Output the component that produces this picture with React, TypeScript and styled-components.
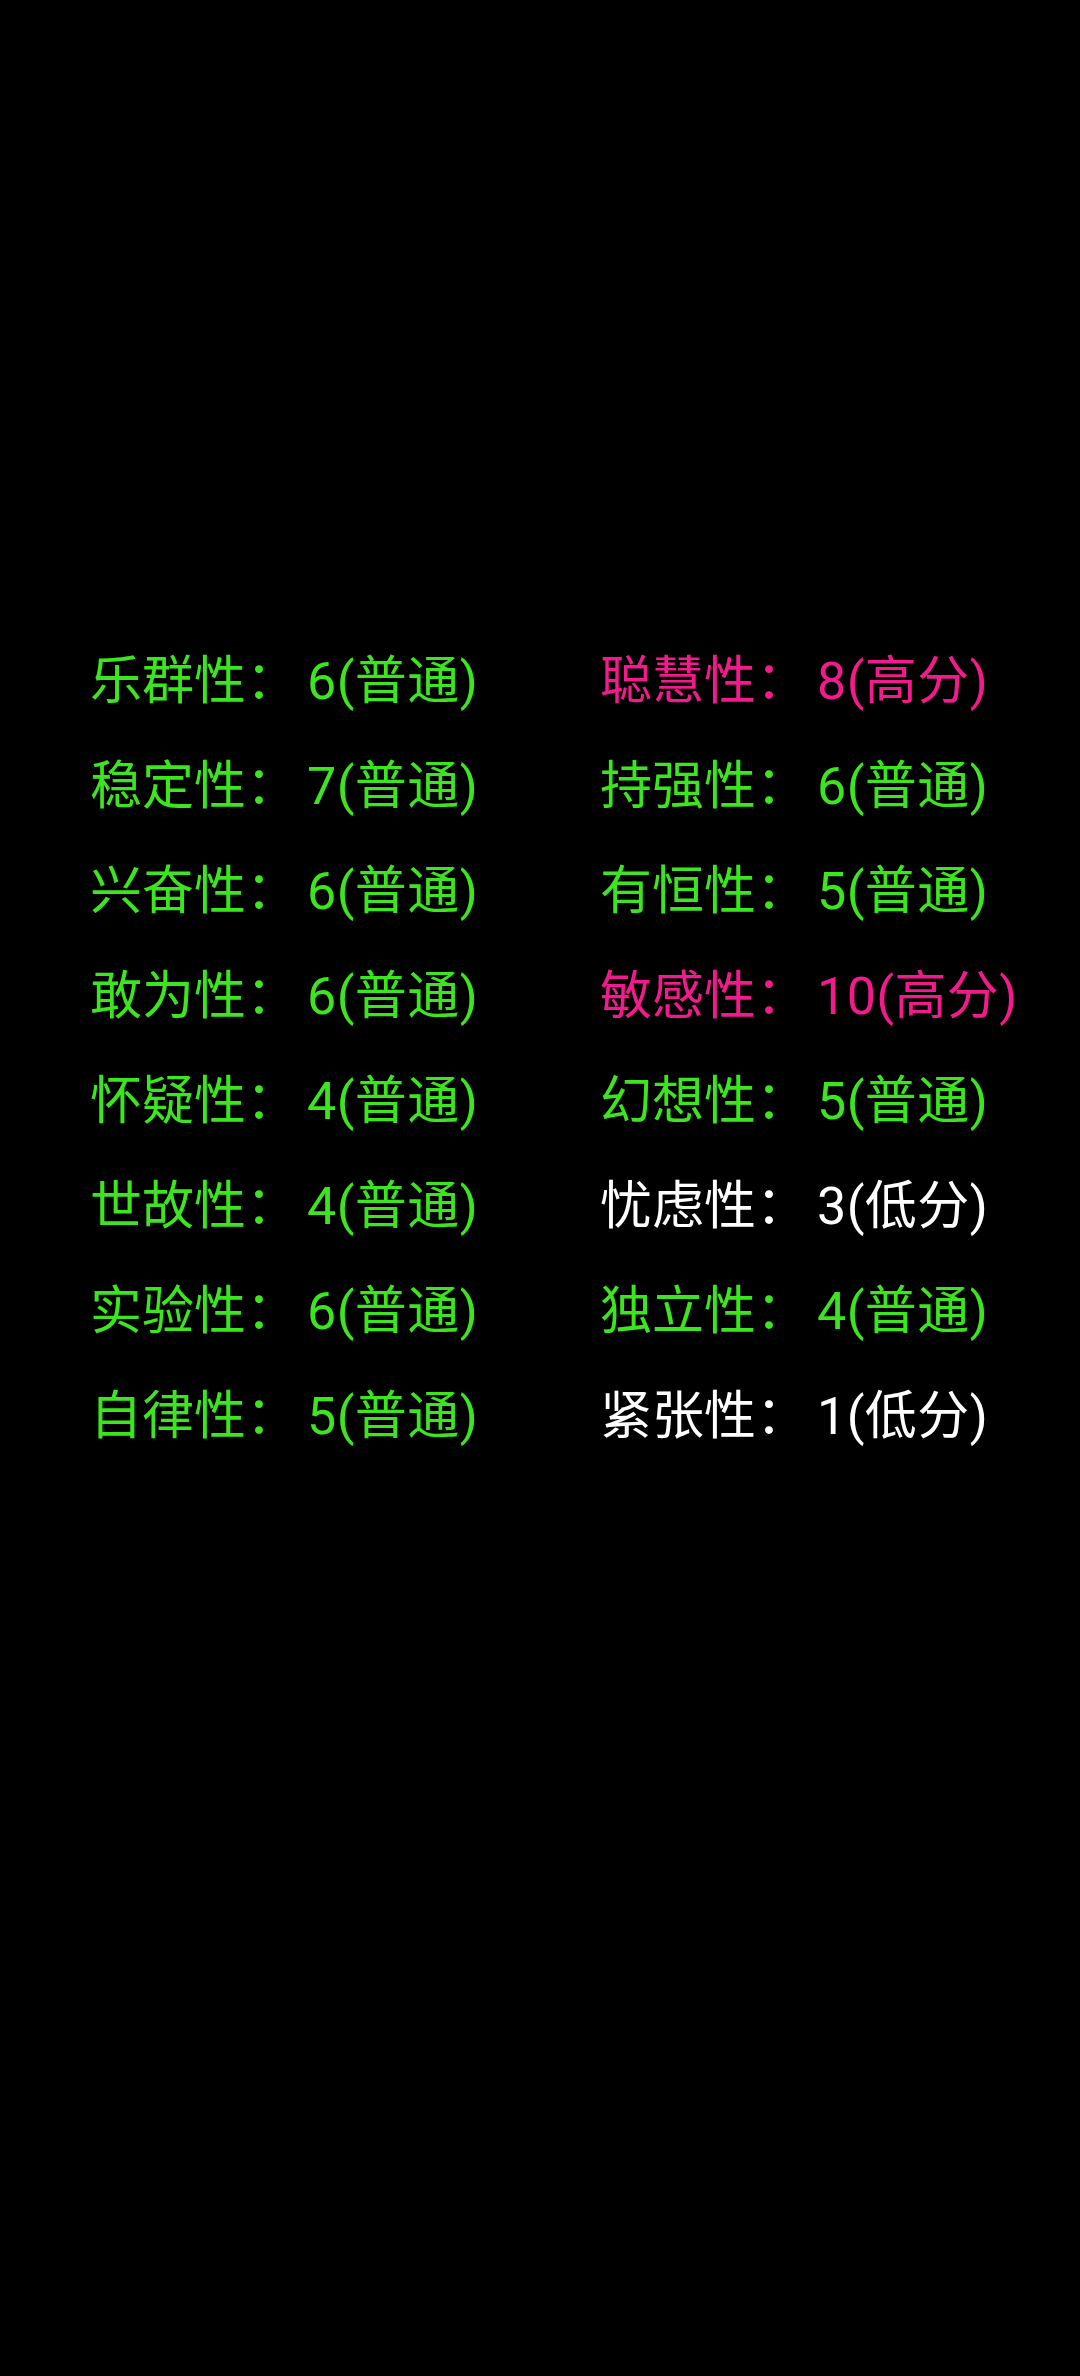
import React from "react";
import styled, { createGlobalStyle } from "styled-components";

const Global = createGlobalStyle`
  html, body { margin: 0; padding: 0; background: #000; }
  body { font-family: Roboto, "Noto Sans CJK SC", sans-serif; }
`;

const Page = styled.div`
  width: 1080px;
  height: 2376px;
  background: #000;
  box-sizing: border-box;
  padding: 629px 0 0 90px;
`;

const Grid = styled.div`
  display: grid;
  grid-template-columns: 510px 1fr;
  grid-auto-rows: 105px;
`;

type Level = "normal" | "high" | "low";

const colors: Record<Level, string> = {
  normal: "#3ce61e",
  high: "#f21a8c",
  low: "#ffffff",
};

const Item = styled.div<{ $level: Level }>`
  font-family: Roboto, "Noto Sans CJK SC", sans-serif;
  font-size: 52px;
  line-height: 105px;
  white-space: pre;
  color: ${(p) => colors[p.$level]};
`;

const Value = styled.span`
  margin-left: 9px;
  letter-spacing: 0.4px;
`;

const left: [string, number, Level][] = [
  ["乐群性", 6, "normal"],
  ["稳定性", 7, "normal"],
  ["兴奋性", 6, "normal"],
  ["敢为性", 6, "normal"],
  ["怀疑性", 4, "normal"],
  ["世故性", 4, "normal"],
  ["实验性", 6, "normal"],
  ["自律性", 5, "normal"],
];

const right: [string, number, Level][] = [
  ["聪慧性", 8, "high"],
  ["持强性", 6, "normal"],
  ["有恒性", 5, "normal"],
  ["敏感性", 10, "high"],
  ["幻想性", 5, "normal"],
  ["忧虑性", 3, "low"],
  ["独立性", 4, "normal"],
  ["紧张性", 1, "low"],
];

const label: Record<Level, string> = { normal: "普通", high: "高分", low: "低分" };

function Trait({ d }: { d: [string, number, Level] }) {
  return (
    <Item $level={d[2]}>
      {`${d[0]}：`}
      <Value>{`${d[1]}(${label[d[2]]})`}</Value>
    </Item>
  );
}

export default function App() {
  return (
    <>
      <Global />
      <Page>
        <Grid>
          {left.map((l, i) => (
            <React.Fragment key={i}>
              <Trait d={l} />
              <Trait d={right[i]} />
            </React.Fragment>
          ))}
        </Grid>
      </Page>
    </>
  );
}
